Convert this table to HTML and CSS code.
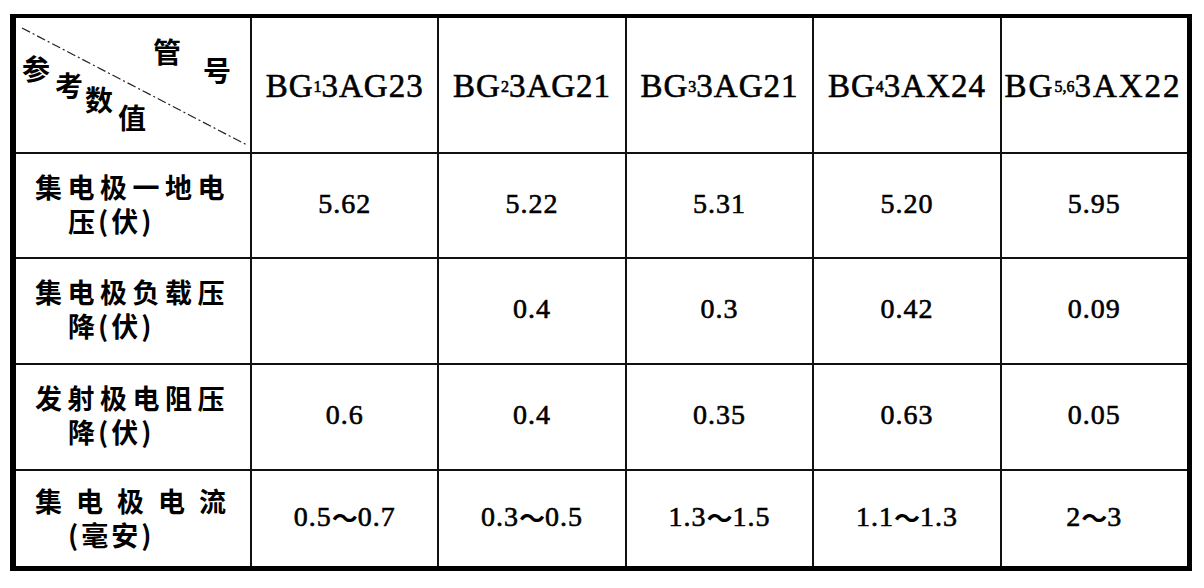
FILE: index.html
```html
<!DOCTYPE html>
<html lang="zh-CN">
<head>
<meta charset="utf-8">
<title>参考数值</title>
<link rel="stylesheet" href="styles.css">
</head>
<body>
<div class="sheet">
  <div class="cell corner">
    <svg class="diag" width="234" height="134" viewBox="0 0 234 134"><line x1="6" y1="10" x2="231" y2="127" stroke="#222" stroke-width="1.2" stroke-dasharray="9 3 2 3"/></svg>
    <span class="cj c-guan">管</span>
    <span class="cj c-hao">号</span>
    <span class="cj c-can">参</span>
    <span class="cj c-kao">考</span>
    <span class="cj c-shu">数</span>
    <span class="cj c-zhi">值</span>
  </div>
  <div class="cell head">BG<sub>1</sub>3AG23</div>
  <div class="cell head">BG<sub>2</sub>3AG21</div>
  <div class="cell head">BG<sub>3</sub>3AG21</div>
  <div class="cell head">BG<sub>4</sub>3AX24</div>
  <div class="cell head tight">BG<sub>5,6</sub>3AX22</div>

  <div class="cell label"><span class="l1">集电极一地电</span><span class="l2">压(伏)</span></div>
  <div class="cell num">5.62</div>
  <div class="cell num">5.22</div>
  <div class="cell num">5.31</div>
  <div class="cell num">5.20</div>
  <div class="cell num">5.95</div>

  <div class="cell label"><span class="l1">集电极负载压</span><span class="l2">降(伏)</span></div>
  <div class="cell num"></div>
  <div class="cell num">0.4</div>
  <div class="cell num">0.3</div>
  <div class="cell num">0.42</div>
  <div class="cell num">0.09</div>

  <div class="cell label"><span class="l1">发射极电阻压</span><span class="l2">降(伏)</span></div>
  <div class="cell num">0.6</div>
  <div class="cell num">0.4</div>
  <div class="cell num">0.35</div>
  <div class="cell num">0.63</div>
  <div class="cell num">0.05</div>

  <div class="cell label last"><span class="l1 wide">集电极电流</span><span class="l2">(毫安)</span></div>
  <div class="cell num">0.5<span class="wave">～</span>0.7</div>
  <div class="cell num">0.3<span class="wave">～</span>0.5</div>
  <div class="cell num">1.3<span class="wave">～</span>1.5</div>
  <div class="cell num">1.1<span class="wave">～</span>1.3</div>
  <div class="cell num">2<span class="wave">～</span>3</div>
</div>
</body>
</html>
```

FILE: styles.css
```css
html, body {
  margin: 0;
  padding: 0;
  background: #fff;
}

body {
  padding: 14px 0 0 10px;
  font-family: "Liberation Serif", "Noto Sans CJK SC", serif;
  color: #000;
}

.sheet {
  width: 1171px;
  display: grid;
  grid-template-columns: 234px repeat(5, 1fr);
  grid-template-rows: 134px 103px 104px 104px 95px;
  gap: 2px;
  background: #111;
  border-style: solid;
  border-color: #000;
  border-width: 4px 5px 5px 6px;
}

.cell {
  background: #fff;
  display: flex;
  align-items: center;
  justify-content: center;
}

.corner {
  position: relative;
  display: block;
}

.diag {
  position: absolute;
  left: 0;
  top: 0;
}

.cj {
  position: absolute;
  font-family: "Noto Sans CJK SC", sans-serif;
  font-weight: 700;
  font-size: 28px;
  line-height: 1;
}

.c-guan { left: 137px; top: 19px; }
.c-hao  { left: 187px; top: 38px; }
.c-can  { left: 6px;   top: 36px; }
.c-kao  { left: 39px;  top: 53px; }
.c-shu  { left: 69px;  top: 67px; }
.c-zhi  { left: 102px; top: 85px; }

.head {
  font-family: "Liberation Serif", serif;
  font-size: 33px;
  letter-spacing: 1px;
  -webkit-text-stroke: 0.6px #000;
  white-space: nowrap;
  padding-top: 2px;
}

.head sub {
  font-size: 16px;
  vertical-align: 0;
  letter-spacing: 0;
  position: relative;
  top: 1px;
}

.head.tight {
  letter-spacing: 2px;
  justify-content: flex-start;
  padding-left: 3px;
}

.label {
  flex-direction: column;
  align-items: flex-start;
  justify-content: center;
  font-family: "Noto Sans CJK SC", sans-serif;
  font-weight: 700;
  font-size: 27px;
  line-height: 34px;
  padding-left: 19px;
  padding-bottom: 4px;
}

.label .l1,
.label .l2 {
  display: block;
  height: 34px;
}

.label .l1 {
  letter-spacing: 5.5px;
}

.label .l1.wide {
  letter-spacing: 14px;
}

.label .l2 {
  padding-left: 33px;
  letter-spacing: 3px;
}

.label.last {
  padding-bottom: 2px;
}

.num {
  font-family: "Liberation Serif", "Times New Roman", serif;
  font-size: 28px;
  letter-spacing: 1px;
  -webkit-text-stroke: 0.6px #000;
  padding-bottom: 4px;
}

.wave {
  font-family: "Noto Sans CJK SC", sans-serif;
  font-weight: 700;
  letter-spacing: 0;
  font-size: 26px;
  -webkit-text-stroke: 0;
}
```
